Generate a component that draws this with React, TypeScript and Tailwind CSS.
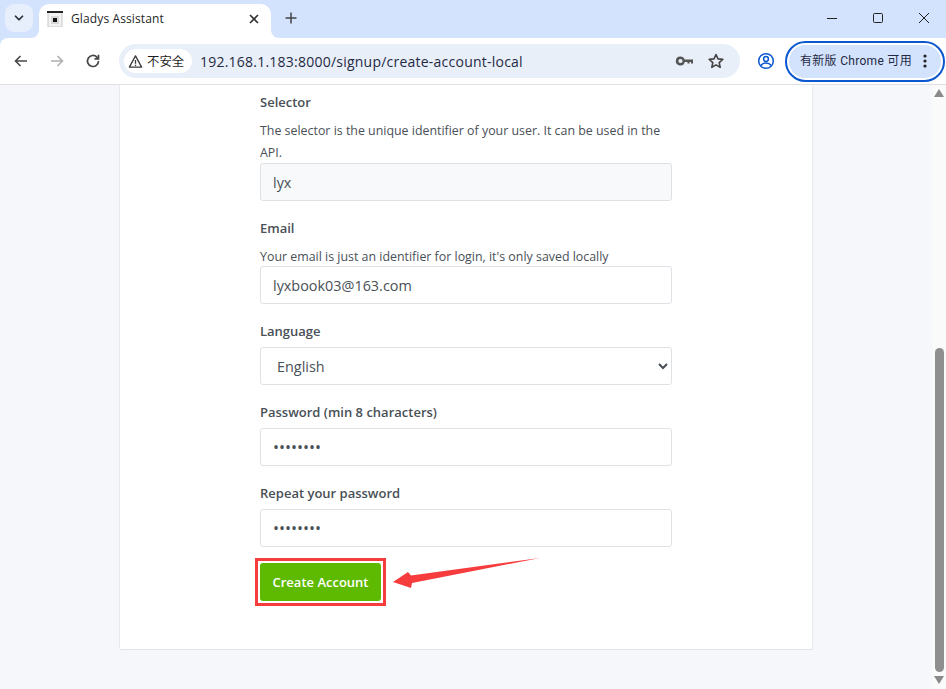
import { ChevronDown } from "lucide-react";

const uiFont = "font-['Open_Sans','Noto_Sans',sans-serif]";

function Label({ children }: { children: string }) {
  return <p className="text-[13px] font-semibold leading-[23px] text-[#495057]">{children}</p>;
}

function Field({ value, type = "text", disabled }: { value: string; type?: string; disabled?: boolean }) {
  const size = type === "password" ? "text-[16px]" : "text-[14.4px]";
  return (
    <input
      readOnly
      type={type}
      value={value}
      className={
        disabled
          ? `block h-[38px] w-full rounded-[3px] border border-[#dee2e6] bg-[#f8f9fa] px-3 ${size} text-[#495057] outline-none`
          : `block h-[38px] w-full rounded-[3px] border border-[#dee2e6] bg-white px-3 ${size} text-[#495057] outline-none`
      }
    />
  );
}

function TitleBar() {
  return (
    <div className="flex h-[38px] shrink-0 bg-[#d3e3fd] pl-[5px] pt-1">
      <div className="flex size-[28px] items-center justify-center rounded-[9px] bg-[#e7effd]">
        <ChevronDown size={14} strokeWidth={3} className="text-[#2a3038]" />
      </div>
      <div className="relative ml-[6px] flex h-[34px] w-[232px] items-center rounded-t-[10px] bg-white pb-[5px] pl-[8px] pr-[9px]">
        {/* tab foot curves */}
        <div className="absolute bottom-0 left-[-8px] size-[8px] bg-white">
          <div className="size-full rounded-br-[8px] bg-[#d3e3fd]" />
        </div>
        <div className="absolute bottom-0 right-[-8px] size-[8px] bg-white">
          <div className="size-full rounded-bl-[8px] bg-[#d3e3fd]" />
        </div>
        <svg width="16" height="16" viewBox="0 0 16 16">
          <rect x="1" y="1" width="14" height="15" fill="#f2f2f2" stroke="#c8c8c8" strokeWidth="1" />
          <rect x="0" y="0" width="16" height="2" fill="#222222" />
          <rect x="4" y="5" width="8" height="8" fill="#d8d8d8" />
          <rect x="6" y="7" width="4" height="4" fill="#111111" />
        </svg>
        <span className="ml-[8px] flex-1 text-[12px] tracking-[0.12px] text-[#1f1f1f]">Gladys Assistant</span>
        <svg width="16" height="16" viewBox="0 0 16 16" fill="none" stroke="#333" strokeWidth="1.6">
          <path d="M4 4l8 8M12 4l-8 8" />
        </svg>
      </div>
      <div className="ml-[12px] flex h-[28px] items-center">
        <svg width="16" height="16" viewBox="0 0 16 16" fill="none" stroke="#444" strokeWidth="1.5">
          <path d="M8 2.500v11M2.500 8h11" />
        </svg>
      </div>
      <div className="ml-auto flex h-[28px] items-center gap-[30px] pr-[14px]">
        <svg width="16" height="16" viewBox="0 0 16 16" fill="none" stroke="#222" strokeWidth="1">
          <path d="M3 8.500h10" />
        </svg>
        <svg width="16" height="16" viewBox="0 0 16 16" fill="none" stroke="#222" strokeWidth="1">
          <rect x="3.500" y="3.500" width="9" height="9" rx="1" />
        </svg>
        <svg width="16" height="16" viewBox="0 0 16 16" fill="none" stroke="#222" strokeWidth="1">
          <path d="M3 3l10 10M13 3L3 13" />
        </svg>
      </div>
    </div>
  );
}

function ToolBar() {
  return (
    <div className="flex h-[47px] shrink-0 items-center rounded-tl-[8px] border-b border-[#e0e0e0] bg-white">
      <div className="flex w-[119px] items-center pl-[13px]">
        <svg width="16" height="16" viewBox="0 0 16 16" fill="none" stroke="#474747" strokeWidth="1.6">
          <path d="M14 8H2.500M7.500 3L2.500 8l5 5" />
        </svg>
        <svg className="ml-[20px]" width="16" height="16" viewBox="0 0 16 16" fill="none" stroke="#b0b0b0" strokeWidth="1.6">
          <path d="M2 8h11.500M8.500 3l5 5-5 5" />
        </svg>
        <svg className="ml-[20px]" width="16" height="16" viewBox="0 0 16 16" fill="none" stroke="#474747" strokeWidth="1.700">
          <path d="M13.500 8a5.500 5.500 0 1 1-1.600-3.900L13.500 5.700" />
          <path d="M13.500 1.800v4h-4" />
        </svg>
      </div>
      <div className="flex h-[34px] w-[621px] items-center rounded-full bg-[#e9eff9] pl-[5px] pr-[15px]">
        <div className="flex h-[24px] w-[68px] items-center gap-[4px] rounded-full bg-white pl-[4px]">
          <svg width="15" height="15" viewBox="0 0 16 16" fill="none" stroke="#3a3a3a" strokeWidth="1.4">
            <path d="M8 2L1.500 14h13z" strokeLinejoin="round" />
            <path d="M8 6.500v4M8 11.500v1.200" />
          </svg>
          <span className="font-['Noto_Sans_CJK_SC',sans-serif] text-[12.400px] text-[#1f1f1f]">不安全</span>
        </div>
        <span className="ml-[8px] flex-1 text-[14px] tracking-[0.23px] text-[#1f2a44]">192.168.1.183:8000/signup/create-account-local</span>
        <svg width="20" height="20" viewBox="0 0 20 20" fill="#555">
          <path fillRule="evenodd" d="M6.500 5.500a4.500 4.500 0 0 1 4.200 3H19v4h-2V11h-1.500v1.500h-2V11h-2.800a4.500 4.500 0 1 1-4.200-5.500zm0 2.400a2.100 2.100 0 1 0 0 4.200 2.100 2.100 0 0 0 0-4.200z" />
        </svg>
        <svg className="ml-[13px]" width="18" height="18" viewBox="0 0 18 18" fill="none" stroke="#444" strokeWidth="1.600">
          <path d="M9 2.500l2 4.400 4.800.5-3.600 3.200 1 4.700L9 12.900l-4.200 2.400 1-4.700L2.200 7.400 7 6.900z" strokeLinejoin="round" />
        </svg>
      </div>
      <svg className="ml-[17px]" width="18" height="18" viewBox="0 0 18 18" fill="none" stroke="#0b57d0" strokeWidth="1.5">
        <circle cx="9" cy="9" r="7.300" />
        <circle cx="9" cy="7" r="2.400" />
        <path d="M3.800 13.500c1.500-2 3.200-2.400 5.200-2.400s3.700.4 5.200 2.400" />
      </svg>
      <div className="ml-[10px] flex h-[41px] w-[160px] items-center rounded-full border-2 border-[#0b57d0] p-[2px]">
        <div className="flex h-full w-full items-center rounded-full bg-[#d3e3fd] pl-[11px]">
          <span className="font-['Roboto','Noto_Sans_CJK_SC',sans-serif] text-[12px] tracking-[0.3px] text-[#1f2a44]">有新版 Chrome 可用</span>
          <svg className="ml-[11px]" width="4" height="14" viewBox="0 0 4 14" fill="#222">
            <circle cx="2" cy="2" r="1.600" />
            <circle cx="2" cy="7" r="1.600" />
            <circle cx="2" cy="12" r="1.600" />
          </svg>
        </div>
      </div>
    </div>
  );
}

function Annotation() {
  return (
    <>
      <div className="absolute left-[255px] top-[558px] h-[48px] w-[131px] border-[3px] border-[#f63c3c]" />
      <svg className="absolute left-[390px] top-[555px]" width="155" height="36" viewBox="0 0 155 36">
        <polygon points="3,27 18,17 21,20.500 150,3 22,28 21,33" fill="#f63c3c" />
      </svg>
    </>
  );
}

export default function App() {
  return (
    <div className={`relative flex h-[689px] w-[946px] flex-col overflow-hidden bg-[#d3e3fd] ${uiFont}`}>
      <TitleBar />
      <ToolBar />
      <div className="flex min-h-0 flex-1">
        <div className="flex-1 bg-[#f5f7fb] pl-[119px]">
          <div className="h-[565px] w-[694px] rounded-b-[3px] border border-t-0 border-[#e8eaef] border-b-[#e0e3e9] bg-white pl-[140px] pr-[140px] pt-[6px]">
            <Label>Selector</Label>
            <p className="mt-[6px] text-[12.4px] leading-[22px] text-[#495057]">
              The selector is the unique identifier of your user. It can be used in the API.
            </p>
            <div className="mt-[-1px]">
              <Field value="lyx" disabled />
            </div>

            <div className="mt-[16px]">
              <Label>Email</Label>
            </div>
            <p className="mt-[7px] text-[12.4px] leading-[19px] text-[#495057]">
              Your email is just an identifier for login, it's only saved locally
            </p>
            <Field value="lyxbook03@163.com" />

            <div className="mt-[16px]">
              <Label>Language</Label>
            </div>
            <select className="mt-[4px] block h-[38px] w-full rounded-[3px] border border-[#dee2e6] bg-white pl-3 text-[14.4px] text-[#495057] outline-none">
              <option>English</option>
            </select>

            <div className="mt-[16px]">
              <Label>Password (min 8 characters)</Label>
            </div>
            <div className="mt-[4px]">
              <Field value="12345678" type="password" />
            </div>

            <div className="mt-[16px]">
              <Label>Repeat your password</Label>
            </div>
            <div className="mt-[4px]">
              <Field value="12345678" type="password" />
            </div>

            <button className="mt-[16px] block h-[38px] w-[121px] rounded-[3px] bg-[#5eba00] pt-[1px] text-[13px] font-semibold text-white">
              Create Account
            </button>
          </div>
        </div>
        <div className="flex w-[14px] flex-col items-center bg-[#fafafa] pt-[4px]">
          <svg width="10" height="8" viewBox="0 0 10 8" fill="#8a8a8a">
            <path d="M5 0l5 8H0z" />
          </svg>
          <div className="mt-[251px] h-[324px] w-[9px] rounded-full bg-[#8f8f8f]" />
          <svg className="mt-[4px]" width="10" height="8" viewBox="0 0 10 8" fill="#8a8a8a">
            <path d="M5 8L0 0h10z" />
          </svg>
        </div>
      </div>
      <Annotation />
    </div>
  );
}
